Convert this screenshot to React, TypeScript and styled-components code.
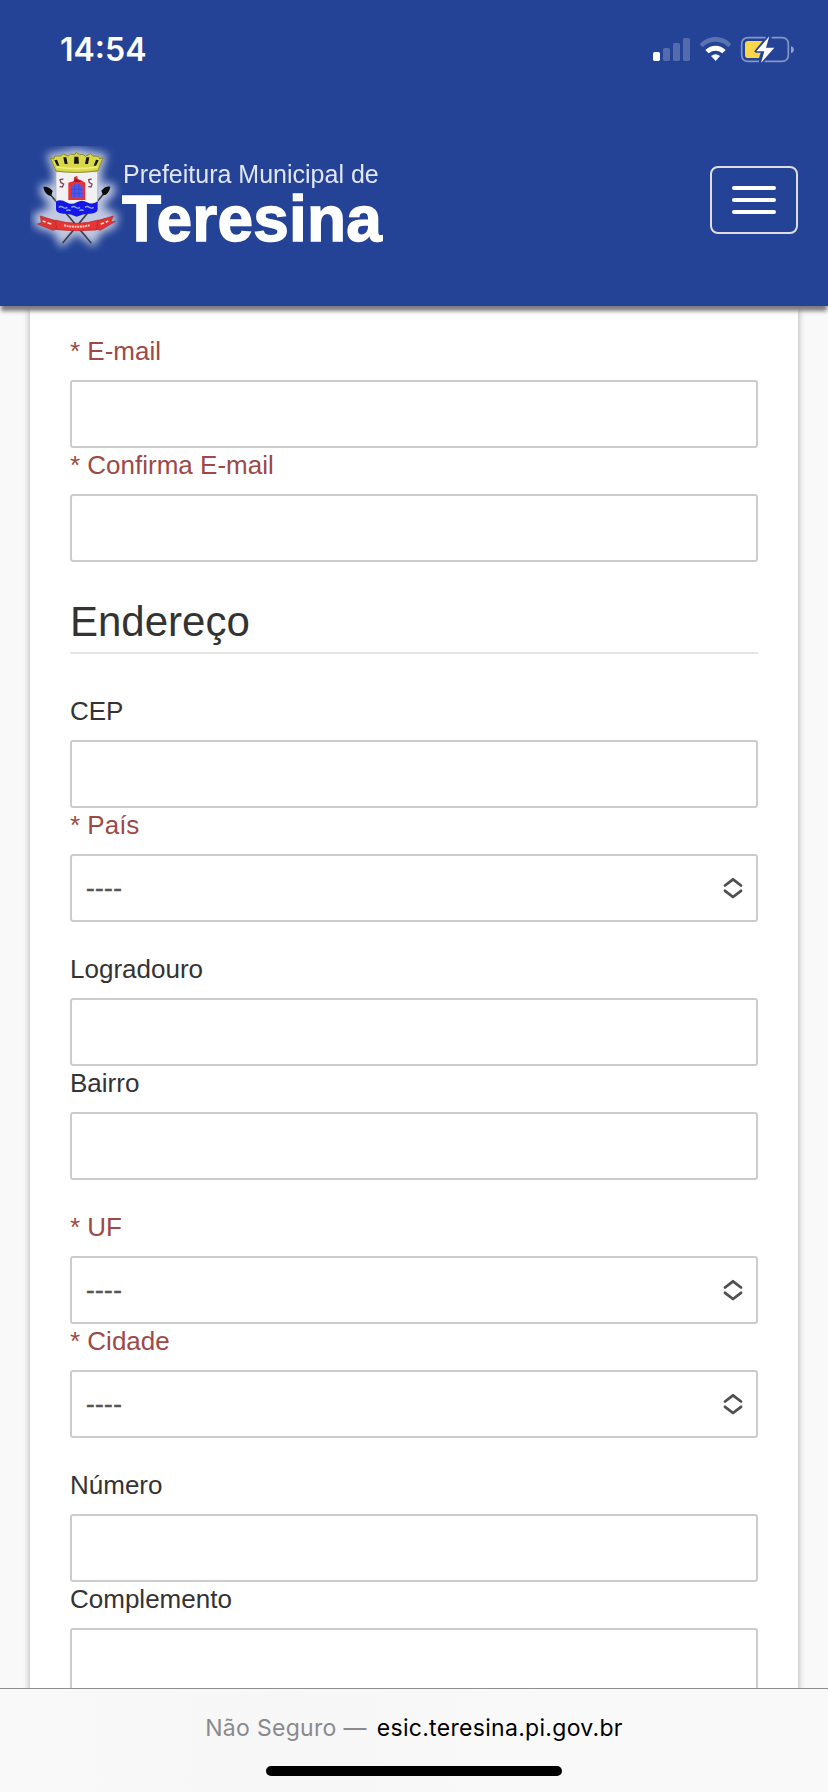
import React from 'react';
import styled, { createGlobalStyle } from 'styled-components';

const GlobalStyle = createGlobalStyle`
  *, *::before, *::after { box-sizing: border-box; }
  body { margin: 0; background: #f8f8f8; overflow: hidden; }
`;

const Screen = styled.div`
  display: flex;
  flex-direction: column;
  width: 828px;
  height: 1792px;
  overflow: hidden;
  background: #f9f9f9;
  font-family: 'Liberation Sans', Arial, Helvetica, sans-serif;
`;

const Header = styled.header`
  position: relative;
  z-index: 2;
  flex: none;
  height: 306px;
  background: #244396;
  box-shadow: 0 6px 4px -1px #7c7c7c;
`;

const StatusBar = styled.div`
  display: flex;
  justify-content: space-between;
  height: 100px;
  padding: 20px 0 0 60px;
`;

const Clock = styled.time`
  font: 600 32px/60px Inter, sans-serif;
  font-feature-settings: 'calt' 1, 'case' 1;
  letter-spacing: 0;
  color: #fff;
`;

const NavBar = styled.div`
  display: flex;
  justify-content: space-between;
  padding: 30px 30px 0 20px;
`;

const Brand = styled.div`
  display: flex;
  color: #fff;
`;

const BrandText = styled.div`
  display: flex;
  flex-direction: column;
  margin-left: -3px;
  padding-top: 30px;
  filter: blur(0.4px);
`;

const BrandSmall = styled.span`
  padding-left: 1px;
  font-size: 25px;
  line-height: 29px;
  color: #e0e6f5;
  white-space: nowrap;
`;

const BrandLarge = styled.span`
  font-size: 64px;
  font-weight: 700;
  line-height: 60px;
  letter-spacing: 0.2px;
  white-space: nowrap;
  -webkit-text-stroke: 1.4px #fff;
`;

const MenuButton = styled.button`
  display: flex;
  flex-direction: column;
  align-items: center;
  justify-content: center;
  gap: 8px;
  width: 88px;
  height: 68px;
  margin-top: 36px;
  padding: 0;
  border: 2px solid #ddd;
  border-radius: 8px;
  background: transparent;
`;

const MenuBar = styled.span`
  width: 44px;
  height: 4px;
  border-radius: 2px;
  background: #fff;
`;

const Main = styled.main`
  flex: 1;
  min-height: 0;
  overflow: hidden;
  padding: 0 30px;
`;

const Card = styled.form`
  height: 1500px;
  padding: 28px 40px 0;
  background: #fff;
  box-shadow: 0 0 7px rgba(0, 0, 0, 0.33);
`;

const FieldGroup = styled.div`
  display: flex;
  flex-direction: column;
  margin-bottom: 30px;
`;

const Label = styled.label<{ $required?: boolean }>`
  height: 46px;
  font-size: 26px;
  line-height: 34px;
  color: ${(p) => (p.$required ? '#9d4945' : '#333')};
`;

const Control = styled.div`
  display: flex;
  align-items: center;
  justify-content: space-between;
  height: 68px;
  padding: 0 13px 0 14px;
  border: 2px solid #ccc;
  border-radius: 3px;
  background: #fff;
  color: #555;
  font-size: 26px;
`;

const Value = styled.span`
  letter-spacing: 0.4px;
  -webkit-text-stroke: 0.5px #555;
`;

const SectionTitle = styled.h2`
  height: 62px;
  margin: 0 0 40px;
  border-bottom: 2px solid #e5e5e5;
  font-size: 42px;
  font-weight: 400;
  line-height: 60px;
  color: #333;
`;

const AddressBar = styled.footer`
  position: relative;
  z-index: 2;
  flex: none;
  display: flex;
  flex-direction: column;
  align-items: center;
  height: 104px;
  border-top: 1px solid #8e8e8e;
  background: linear-gradient(90deg, #f9f9f9, #f7f7f7 35%, #f9f9f9 65%, #f9f9f9);
`;

const Address = styled.div`
  display: flex;
  gap: 10px;
  height: 77px;
  font: 400 23px/78px Inter, sans-serif;
  letter-spacing: 0.3px;
  color: #000;
  white-space: nowrap;
`;

const Security = styled.span`
  color: #8a8a8d;
`;

const HomeIndicator = styled.div`
  width: 296px;
  height: 10px;
  border-radius: 5px;
  background: #000;
`;

const StatusIcons = () => (
  <svg width="198" height="60" viewBox="0 0 594 180" fill="#fff">
    <rect x="69" y="96" width="21" height="27" rx="5" />
    <g opacity=".22">
      <rect x="99" y="84" width="21" height="39" rx="5" />
      <rect x="129" y="69" width="21" height="54" rx="5" />
      <rect x="159" y="54" width="21" height="69" rx="5" />
    </g>
    <path d="M209 73C235 44 279 44 304 73L295 82C274 60 239 60 218 82Z" opacity=".25" />
    <path d="M226 90C243 73 270 73 287 90L277 100C264 90 249 90 236 100Z" />
    <path d="M243 108Q257 98 270 108L257 123Z" />
    <path
      d="M407 53H355Q335 53 335 73V104Q335 124 355 124H387M425 53H455Q475 53 475 73V104Q475 124 455 124H403"
      fill="none" stroke="#fff" strokeWidth="5" opacity=".45"
    />
    <path d="M483 78Q492 82 492 89Q492 96 483 100Z" opacity=".5" />
    <path d="M398 63L372 95H393L387 114H354Q345 114 345 104V73Q345 63 354 63Z" fill="#fad648" />
    <path d="M418 49L379 94H403L393 129L433 83H408Z" stroke="#244396" strokeWidth="9" paintOrder="stroke" strokeLinejoin="round" />
  </svg>
);

const Crest = () => (
  <svg width="105" height="140" viewBox="0 0 315 420">
    <defs>
      <filter id="glow" x="-30%" y="-30%" width="160%" height="160%">
        <feGaussianBlur stdDeviation="13" />
      </filter>
      <filter id="soft"><feGaussianBlur stdDeviation="1.6" /></filter>
      <clipPath id="bounds"><path d="M30 48H315V372H30Z" /></clipPath>
    </defs>
    <g clipPath="url(#bounds)">
      <path
        d="M84 76L130 67L169 58L208 67L257 76L241 122V166L279 164L282 187L240 232L291 256L282 290L240 307L220 345L169 307L124 347L104 306L50 288L43 256L98 232L64 188L66 166L103 170V122Z"
        fill="#fff" stroke="#fff" strokeWidth="8" opacity=".72" filter="url(#glow)"
      />
    </g>
    <g filter="url(#soft)">
      <g stroke="#3a3c45" strokeWidth="5" fill="none">
        <path d="M82 183L214 340M258 183L128 339" />
      </g>
      <path d="M70 171Q84 168 98 183L93 198Q75 196 70 171ZM271 170Q257 166 244 182L249 196Q267 194 271 170Z" fill="#07080b" />
      <path d="M108 125H233V214Q233 243 170 256Q108 243 108 214Z" fill="#f1f1f3" stroke="#aaaab2" strokeWidth="2" />
      <path
        d="M108 214Q123 207 139 217Q155 226 170 217Q186 207 201 217Q216 226 233 214V237Q233 250 211 251Q190 250 170 260Q151 250 131 251Q108 250 108 237Z"
        fill="#1219e6"
      />
      <path d="M116 232q7-5 13 0t13 0M154 232q7-5 13 0t13 0M195 232q7-5 13 0t13 0M139 242q7-4 13 0M178 242q7-4 13 0" fill="none" stroke="#87a7ff" strokeWidth="4" />
      <path d="M145 158L162 153V142L171 137L174 147L184 151L196 158V210H145Z" fill="#e5333a" />
      <path d="M153 170L166 162H178L188 170V201H153Z" fill="#5059ed" />
      <path d="M153 178H188M153 190H188M164 164V201M177 164V201" stroke="#354ac9" strokeWidth="2" />
      <path d="M165 145L176 151L184 156H160Z" fill="#9b1f30" />
      <path d="M130 147L120 149L123 158L131 162L127 171L119 170M215 147L206 149L208 158L216 162L213 171L205 170" fill="none" stroke="#804456" strokeWidth="4" />
      <path
        d="M91 84L101 87L105 78L123 78L128 71L145 78L152 72L164 74L168 67L178 74L189 73L196 79L212 71L218 78L235 79L239 86L249 83L234 122Q170 132 108 123Z"
        fill="#d8d84a" stroke="#89892e" strokeWidth="3"
      />
      <path d="M103 91L111 89L118 107H111ZM130 82H139L143 102H134ZM163 80H175L177 101H162ZM199 82H208L204 102H195ZM228 89L236 91L228 107H221Z" fill="#15160c" />
      <path d="M109 111Q170 121 233 111" fill="none" stroke="#f1ed79" strokeWidth="5" />
      <path d="M61 258L104 271L113 297L99 301L52 282L64 278ZM280 258L235 271L226 297L241 301L287 274L272 276Z" fill="#df3130" stroke="#a82b35" strokeWidth="2" />
      <path d="M106 270Q171 290 235 270L229 300Q170 305 111 299Z" fill="#e83430" stroke="#ac2930" strokeWidth="2" />
      <path d="M68 273l9 3m5 2 12 4M242 282l10-3m5-2 8-4" stroke="#ffe2d8" strokeWidth="5" />
      <path d="M132 286Q170 295 209 286" fill="none" stroke="#ffc5ba" strokeWidth="6" strokeDasharray="6 2" />
    </g>
  </svg>
);

const SelectIcon = () => (
  <svg width="20" height="22" viewBox="0 0 20 22" fill="none" stroke="#505050" strokeWidth="2.8" strokeLinecap="round" strokeLinejoin="round">
    <path d="M2 8.5L10 2.3L18 8.5M2 13.8L10 20L18 13.8" />
  </svg>
);

type FieldProps = { label: string; required?: boolean; select?: boolean };

const Field = ({ label, required, select }: FieldProps) => (
  <>
    <Label $required={required}>{required ? `* ${label}` : label}</Label>
    <Control>
      {select && (
        <>
          <Value>----</Value>
          <SelectIcon />
        </>
      )}
    </Control>
  </>
);

export default function App() {
  return (
    <Screen>
      <GlobalStyle />
      <Header>
        <StatusBar>
          <Clock>14:54</Clock>
          <StatusIcons />
        </StatusBar>
        <NavBar>
          <Brand>
            <Crest />
            <BrandText>
              <BrandSmall>Prefeitura Municipal de</BrandSmall>
              <BrandLarge>Teresina</BrandLarge>
            </BrandText>
          </Brand>
          <MenuButton type="button" aria-label="Menu">
            <MenuBar />
            <MenuBar />
            <MenuBar />
          </MenuButton>
        </NavBar>
      </Header>
      <Main>
        <Card>
          <FieldGroup>
            <Field label="E-mail" required />
            <Field label="Confirma E-mail" required />
          </FieldGroup>
          <SectionTitle>Endereço</SectionTitle>
          <FieldGroup>
            <Field label="CEP" />
            <Field label="País" required select />
          </FieldGroup>
          <FieldGroup>
            <Field label="Logradouro" />
            <Field label="Bairro" />
          </FieldGroup>
          <FieldGroup>
            <Field label="UF" required select />
            <Field label="Cidade" required select />
          </FieldGroup>
          <FieldGroup>
            <Field label="Número" />
            <Field label="Complemento" />
          </FieldGroup>
        </Card>
      </Main>
      <AddressBar>
        <Address>
          <Security>Não Seguro —</Security>
          <span>esic.teresina.pi.gov.br</span>
        </Address>
        <HomeIndicator />
      </AddressBar>
    </Screen>
  );
}
